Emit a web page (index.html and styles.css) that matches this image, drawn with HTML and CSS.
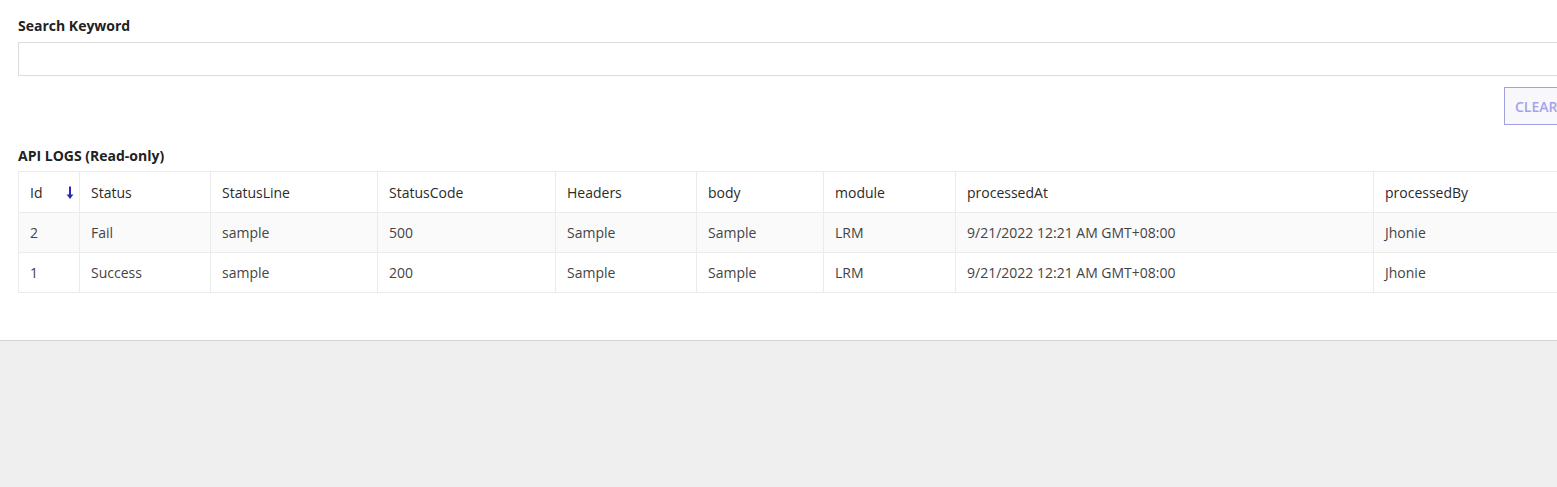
FILE: index.html
```html
<!DOCTYPE html>
<html lang="en">
<head>
<meta charset="utf-8">
<title>API Logs</title>
<link rel="stylesheet" href="styles.css">
</head>
<body>
<main class="panel">
  <div class="panel-inner">
    <label class="field-label" for="kw">Search Keyword</label>
    <input id="kw" class="field-input" type="text">
    <div class="actions">
      <button class="btn-clear" type="button">CLEAR</button>
    </div>
    <h2 class="section-title">API LOGS (Read-only)</h2>
    <table class="logs">
      <colgroup>
        <col style="width:61px">
        <col style="width:131px">
        <col style="width:167px">
        <col style="width:178px">
        <col style="width:141px">
        <col style="width:127px">
        <col style="width:132px">
        <col style="width:418px">
        <col style="width:202px">
      </colgroup>
      <thead>
        <tr>
          <th class="sortable">Id
            <svg class="sort-icon" width="8" height="14" viewBox="0 0 8 14" aria-hidden="true">
              <path d="M4 0.5 V12" stroke="currentColor" stroke-width="2"/>
              <path d="M0.6 8.6 L4 13 L7.4 8.6 Z" fill="currentColor"/>
            </svg>
          </th>
          <th>Status</th>
          <th>StatusLine</th>
          <th>StatusCode</th>
          <th>Headers</th>
          <th>body</th>
          <th>module</th>
          <th>processedAt</th>
          <th>processedBy</th>
        </tr>
      </thead>
      <tbody>
        <tr>
          <td>2</td><td>Fail</td><td>sample</td><td>500</td><td>Sample</td><td>Sample</td><td>LRM</td><td>9/21/2022 12:21 AM GMT+08:00</td><td>Jhonie</td>
        </tr>
        <tr>
          <td>1</td><td>Success</td><td>sample</td><td>200</td><td>Sample</td><td>Sample</td><td>LRM</td><td>9/21/2022 12:21 AM GMT+08:00</td><td>Jhonie</td>
        </tr>
      </tbody>
    </table>
  </div>
</main>
<footer class="page-bottom"></footer>
</body>
</html>
```

FILE: styles.css
```css
html, body {
  margin: 0;
  padding: 0;
}

body {
  font-family: "Open Sans", "Noto Sans", sans-serif;
  color: #333;
  background: #efefef;
  overflow: hidden;
}

.panel {
  height: 340px;
  background: #fff;
  overflow: hidden;
}

.panel-inner {
  width: 1557px;
  padding: 16px 0 0 18px;
  box-sizing: border-box;
}

.field-label {
  display: block;
  width: 1557px;
  font-size: 14px;
  font-weight: 700;
  line-height: 19px;
  color: #222;
  margin-bottom: 7px;
}

.field-input {
  display: block;
  width: 1560px;
  height: 34px;
  box-sizing: border-box;
  border: 1px solid #dcdcdc;
  border-radius: 0;
  padding: 0 10px;
  font: inherit;
  outline: none;
}

.actions {
  display: flex;
  justify-content: flex-end;
  width: 1560px;
  margin-top: 11px;
}

.btn-clear {
  height: 38px;
  width: 74px;
  padding: 0 10px;
  box-sizing: border-box;
  border: 1px solid #a2a2e2;
  background: #f7f7fc;
  color: #a3a3ec;
  font-family: inherit;
  font-size: 14px;
  font-weight: 600;
  text-align: left;
  cursor: pointer;
}

.section-title {
  margin: 21px 0 6px;
  font-size: 14px;
  font-weight: 700;
  line-height: 19px;
  color: #222;
}

.logs {
  border-collapse: collapse;
  table-layout: fixed;
  width: 1557px;
  font-size: 14px;
}

.logs th,
.logs td {
  border: 1px solid #ebebeb;
  text-align: left;
  padding: 0 11px;
  white-space: nowrap;
}

.logs th {
  height: 40px;
  font-weight: 500;
  color: #2a2a2a;
  background: #fff;
}

.logs td {
  height: 39px;
  color: #444;
}

.logs tbody tr:nth-child(odd) td {
  background: #fafafa;
}

.sortable {
  position: relative;
}

.sort-icon {
  position: absolute;
  right: 5px;
  top: 14px;
  color: #2b2bb0;
}

.page-bottom {
  height: 147px;
  border-top: 1px solid #d2d2d2;
  background: #efefef;
}
```
